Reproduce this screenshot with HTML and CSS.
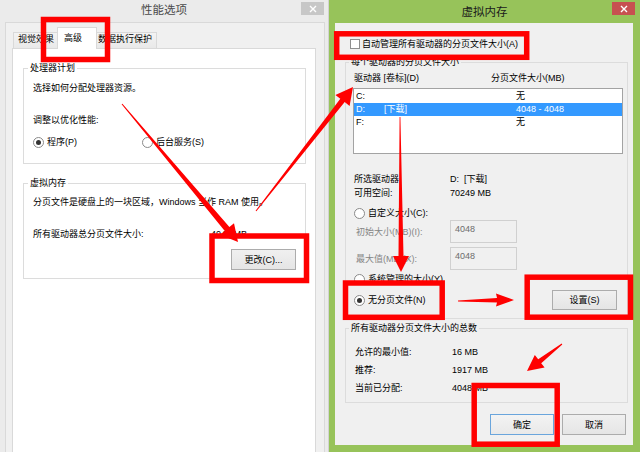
FILE: index.html
```html
<!DOCTYPE html>
<html lang="zh-CN">
<head>
<meta charset="utf-8">
<title>性能选项 / 虚拟内存</title>
<link rel="stylesheet" href="styles.css">
</head>
<body>
<div class="desktop">
  <section class="win win-perf">
    <header class="titlebar">
      <h1 class="title">性能选项</h1>
      <span class="close close-inactive"><svg width="8" height="8" viewBox="0 0 8 8"><path d="M1 1L7 7M7 1L1 7" stroke="#fff" stroke-width="1.4"/></svg></span>
    </header>
    <div class="client client-perf">
      <div class="tabs">
        <div class="tab tab-1">视觉效果</div>
        <div class="tab tab-2 active">高级</div>
        <div class="tab tab-3">数据执行保护</div>
      </div>
      <div class="tabpanel">
        <fieldset class="group group-cpu">
          <legend>处理器计划</legend>
          <div class="gbody">
            <p class="line">选择如何分配处理器资源。</p>
            <p class="line l-adjust">调整以优化性能:</p>
            <div class="radio-row">
              <label class="radio-opt opt-first"><span class="radio checked"></span>程序(P)</label>
              <label class="radio-opt"><span class="radio"></span>后台服务(S)</label>
            </div>
          </div>
        </fieldset>
        <fieldset class="group group-vm">
          <legend>虚拟内存</legend>
          <div class="gbody">
            <p class="line">分页文件是硬盘上的一块区域，Windows 当作 RAM 使用。</p>
            <div class="total"><span class="total-k">所有驱动器总分页文件大小:</span><span>4048 MB</span></div>
            <div class="btn-row"><button class="btn btn-change">更改(C)...</button></div>
          </div>
        </fieldset>
      </div>
    </div>
  </section>

  <section class="win win-vm">
    <header class="titlebar tb-vm">
      <h1 class="title">虚拟内存</h1>
      <span class="close close-active"><svg width="8" height="8" viewBox="0 0 8 8"><path d="M1 1L7 7M7 1L1 7" stroke="#fff" stroke-width="1.4"/></svg></span>
    </header>
    <div class="client client-vm">
      <label class="check-row"><span class="checkbox"></span>自动管理所有驱动器的分页文件大小(A)</label>
      <fieldset class="group group-drives">
        <legend>每个驱动器的分页文件大小</legend>
        <div class="gbody">
          <div class="cols-head"><span class="c1">驱动器 [卷标](D)</span><span>分页文件大小(MB)</span></div>
          <div class="drive-list">
            <div class="drive-row"><span class="d-name">C:</span><span class="d-label"></span><span>无</span></div>
            <div class="drive-row selected"><span class="d-name">D:</span><span class="d-label">[下载]</span><span>4048 - 4048</span></div>
            <div class="drive-row"><span class="d-name">F:</span><span class="d-label"></span><span>无</span></div>
          </div>
          <div class="info">
            <div class="kv"><span class="k">所选驱动器</span><span>D:&nbsp; [下载]</span></div>
            <div class="kv"><span class="k">可用空间:</span><span>70249 MB</span></div>
          </div>
          <label class="radio-opt r-custom"><span class="radio"></span>自定义大小(C):</label>
          <div class="field-row"><span class="fk">初始大小(MB)(I):</span><span class="input">4048</span></div>
          <div class="field-row r-max"><span class="fk">最大值(MB)(X):</span><span class="input">4048</span></div>
          <label class="radio-opt r-sys"><span class="radio"></span>系统管理的大小(Y)</label>
          <div class="nopage-row">
            <label class="radio-opt"><span class="radio checked"></span>无分页文件(N)</label>
            <button class="btn btn-set">设置(S)</button>
          </div>
        </div>
      </fieldset>
      <fieldset class="group group-total">
        <legend>所有驱动器分页文件大小的总数</legend>
        <div class="gbody">
          <div class="tkv"><span class="tk">允许的最小值:</span><span>16 MB</span></div>
          <div class="tkv"><span class="tk">推荐:</span><span>1917 MB</span></div>
          <div class="tkv"><span class="tk">当前已分配:</span><span>4048 MB</span></div>
        </div>
      </fieldset>
      <div class="dlg-buttons">
        <button class="btn btn-ok">确定</button>
        <button class="btn btn-cancel">取消</button>
      </div>
    </div>
  </section>

  <svg class="annot" width="640" height="452" viewBox="0 0 640 452">
    <g fill="none" stroke="#ff0000" stroke-width="5.5">
      <rect x="43.5" y="19.5" width="64" height="40"/>
      <rect x="212" y="236" width="94.5" height="44.5"/>
      <rect x="336.7" y="33.8" width="190" height="23.5"/>
      <rect x="345.5" y="283" width="96.7" height="34.3"/>
      <rect x="527.2" y="277.2" width="103.3" height="40"/>
      <rect x="474.2" y="385.5" width="83" height="58.7"/>
    </g>
    <g fill="#ff0000">
      <polygon points="121.6,104.3 224.8,230.9 220.2,234.8 238,242 234.0,223.2 229.4,227.1 122.4,103.7"/>
      <polygon points="256.4,211.3 344.7,102.1 349.6,106.0 353,87 335.4,94.9 340.3,98.7 255.6,210.7"/>
      <polygon points="399.6,117 398.5,256 393,256 401,272 409,256 403.5,256 400.4,117"/>
      <polygon points="458,300.6 497,298 496,293.5 514,300 496,306.5 497,302.5 458,301.4"/>
      <polygon points="561.7,343.6 538.2,359.2 534.8,354.9 527,371 544.6,367.5 541.2,363.2 562.3,344.4"/>
    </g>
  </svg>
</div>
</body>
</html>
```

FILE: styles.css
```css
* { box-sizing: border-box; }
html, body { margin: 0; padding: 0; }
body {
  width: 640px;
  height: 452px;
  overflow: hidden;
  font-family: "Liberation Sans", "Noto Sans CJK SC", sans-serif;
  font-size: 9px;
  line-height: 12px;
  color: #000;
  background: #ebebeb;
}
.desktop {
  position: relative;
  display: flex;
  width: 640px;
  height: 452px;
  overflow: hidden;
}
.win { display: flex; flex-direction: column; flex: none; }

/* title bars */
.titlebar {
  display: grid;
  grid-template-columns: 1fr auto 1fr;
  height: 22px;
  flex: none;
}
.title {
  grid-column: 2;
  margin: 0;
  font-weight: normal;
  font-size: 11.5px;
  line-height: 20px;
  color: #4a4a4a;
}
.close {
  grid-column: 3;
  justify-self: end;
  align-self: start;
  width: 23px;
  height: 13px;
  margin: 2px 4px 0 0;
  display: flex;
  align-items: center;
  justify-content: center;
}
.close-inactive { background: #c7c7c7; }
.close-active { background: #c75050; margin-right: 5px; }

/* left window */
.win-perf {
  width: 329px;
  height: 480px;
  background: #ebebeb;
  border-right: 1px solid #d2d2d2;
}
.client-perf {
  flex: 1;
  margin: 0 3px 0 5px;
  background: #f0f0f0;
  border: 1px solid #d9d9d9;
  padding: 4px 8px 0 6px;
  display: flex;
  flex-direction: column;
}
.tabs {
  display: flex;
  align-items: flex-end;
  height: 21px;
  padding-left: 1px;
}
.tab {
  height: 16px;
  border: 1px solid #d9d9d9;
  border-bottom: none;
  background: linear-gradient(#f3f3f3, #e9e9e9);
  line-height: 13px;
  white-space: nowrap;
  color: #000;
}
.tab-1 { width: 44px; padding-left: 4px; border-right: none; }
.tab-2 { width: 40px; padding-left: 6px; }
.tab-3 { width: 60px; padding-left: 1px; border-left: none; }
.tab.active {
  height: 22px;
  margin-bottom: -1px;
  background: #fff;
  line-height: 20px;
  position: relative;
  z-index: 1;
}
.tabpanel {
  flex: 1;
  background: #fff;
  border: 1px solid #d9d9d9;
  padding: 13px 9px 0 10px;
}

/* group boxes */
.group {
  margin: 0;
  padding: 0;
  border: 1px solid #dcdcdc;
  min-width: 0;
}
.group legend {
  padding: 0 2px;
  margin-left: 4px;
  line-height: 12px;
}
.gbody { display: flex; flex-direction: column; }
.line { margin: 0; }

.group-cpu .gbody { padding: 8px 0 15px 9px; }
.l-adjust { margin-top: 20px; }
.radio-row { display: flex; margin-top: 10px; height: 12px; }
.radio-opt { display: flex; align-items: center; height: 12px; white-space: nowrap; }
.opt-first { width: 109px; }
.radio {
  width: 11px;
  height: 11px;
  border: 1px solid #8a8a8a;
  border-radius: 50%;
  background: #fff;
  flex: none;
  margin-right: 3px;
  display: grid;
  place-items: center;
}
.radio.checked::after {
  content: "";
  width: 5px;
  height: 5px;
  border-radius: 50%;
  background: #333;
}

.group-vm { margin-top: 13px; }
.group-vm .gbody { padding: 7px 9px 8px 9px; }
.total { display: flex; margin-top: 20px; }
.total-k { width: 178px; }
.btn-row { display: flex; justify-content: flex-end; margin-top: 9px; }

.btn {
  font: inherit;
  color: #000;
  height: 21px;
  padding: 0;
  border: 1px solid #acacac;
  background: linear-gradient(#f0f0f0, #e5e5e5);
}
.btn-change { width: 65px; }

/* right window */
.win-vm {
  width: 311px;
  height: 452px;
  background: #97c35a;
}
.tb-vm { height: 23px; }
.tb-vm .title { color: #1a1a1a; line-height: 21px; padding-top: 2px; }
.client-vm {
  flex: 1;
  margin: 0 7px 7px 6px;
  background: #f0f0f0;
  padding: 15px 5px 0 10px;
  display: flex;
  flex-direction: column;
}
.check-row {
  display: flex;
  align-items: center;
  height: 12px;
  margin-left: 5px;
  white-space: nowrap;
}
.checkbox {
  width: 10px;
  height: 10px;
  border: 1px solid #8f8f8f;
  background: #fff;
  margin-right: 2px;
  flex: none;
}
.group-drives { margin-top: 6px; }
.group-drives legend { margin-left: 3px; }
.group-drives .gbody { padding: 4px 4px 8px 7px; }
.cols-head { display: flex; padding-left: 1px; white-space: nowrap; }
.c1 { width: 137px; }
.drive-list {
  margin-top: 4px;
  height: 66px;
  border: 1px solid #a3a3a3;
  background: #fff;
  padding-top: 1px;
}
.drive-row {
  display: flex;
  height: 13px;
  line-height: 13px;
  padding-left: 2px;
  white-space: nowrap;
}
.drive-row.selected { background: #3399ff; color: #fff; }
.d-name { width: 28px; }
.d-label { width: 132px; }
.info { margin-top: 18px; }
.kv { display: flex; height: 14px; line-height: 14px; padding-left: 1px; }
.k { width: 96px; }
.r-custom { margin-top: 7px; padding-left: 1px; }
.field-row {
  display: flex;
  align-items: center;
  height: 23px;
  margin-top: 1px;
  padding-left: 3px;
}
.fk { width: 94px; color: #858585; }
.input {
  width: 67px;
  height: 23px;
  border: 1px solid #d0d0d0;
  background: #f0f0f0;
  color: #6d6d6d;
  padding: 1px 0 0 4px;
  line-height: 15px;
}
.r-max { margin-top: 4px; }
.r-sys { margin-top: 3px; padding-left: 1px; }
.nopage-row {
  display: flex;
  align-items: center;
  justify-content: space-between;
  height: 20px;
  margin-top: 5px;
  padding: 0 6px 0 1px;
}
.btn-set { width: 65px; height: 20px; }

.group-total { margin-top: 3px; }
.group-total legend { margin-left: 3px; }
.group-total .gbody { padding: 9px 0 5px 9px; }
.tkv { display: flex; height: 18px; line-height: 18px; }
.tk { width: 97px; }

.dlg-buttons {
  display: flex;
  justify-content: flex-end;
  gap: 8px;
  margin-top: 11px;
  padding-right: 2px;
}
.btn-ok { width: 64px; border-color: #6aa5dc; background: linear-gradient(#f3f3f3, #e9e9e9); }
.btn-cancel { width: 64px; }

/* annotations */
.annot {
  position: absolute;
  left: 0;
  top: 0;
  pointer-events: none;
}
```
